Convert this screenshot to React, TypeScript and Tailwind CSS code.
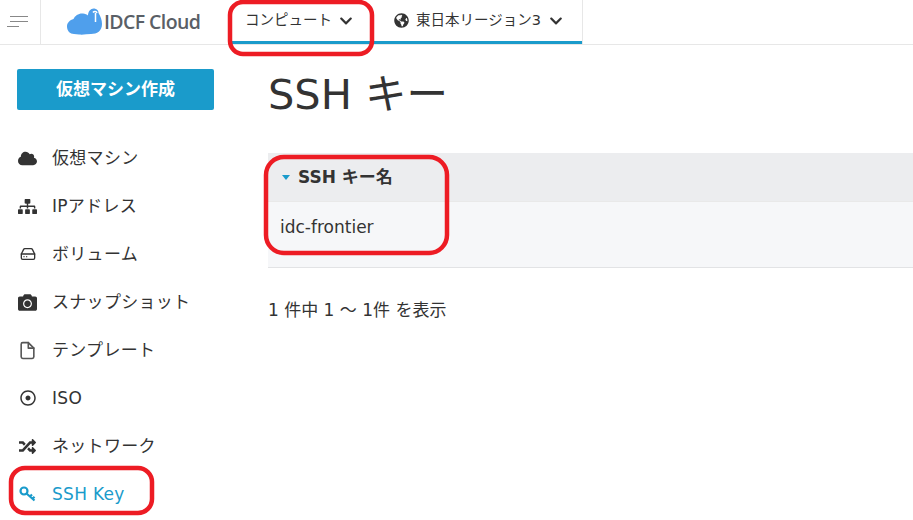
import { FaCloud, FaSitemap, FaCamera, FaRandom, FaGlobeAmericas, FaChevronDown, FaRegDotCircle } from "react-icons/fa";
import { FiHardDrive, FiFile } from "react-icons/fi";
import type { ReactNode } from "react";

function Item({ icon, label, active }: { icon: ReactNode; label: string; active?: boolean }) {
  return (
    <div className={`flex h-12 items-center ${active ? "text-[#1a9bcb]" : "text-[#333333]"}`}>
      <div className="flex w-[52px] justify-center pl-[3px]">
        <div className="flex w-5 justify-center">{icon}</div>
      </div>
      <span className="text-[17px] leading-none tracking-[0.3px]">{label}</span>
    </div>
  );
}

export default function App() {
  return (
    <div className="relative h-[520px] w-[913px] overflow-hidden bg-white font-['DejaVu_Sans','Noto_Sans_CJK_JP',sans-serif] text-[#333333]">
      <header className="flex h-[45px] border-b border-[#e7e7e7]">
        <div className="flex w-[41px] flex-col items-center justify-center gap-[4px] border-r border-[#e7e7e7] pr-[3px] pb-[1px]">
          <div className="h-px w-[18px] bg-[#888888]" />
          <div className="h-px w-[18px] bg-[#888888]" />
          <div className="ml-[7px] h-px w-[12px] self-start bg-[#888888]" />
        </div>
        <div className="flex w-[187px] items-center pl-[26px]">
          <svg width="35" height="27" viewBox="0 0 35 27" className="mb-[2px]">
            <path d="M7 26C3 26 0 23 0 18.500C0 14.500 3 12 6.500 11C8 7.500 12 5 16 5.500C18 5.800 20 6.500 21 7.500C21 3 24 0 27.500 0.500C30.500 1 31.500 3 31.500 5C33.500 8 35 12 35 16C35 23 30 26 24 26C20 26 16 27 12 26.500Z" fill="#4f9fec" />
            <path d="M28.500 5V14M26 4.500C27 3 29.500 3 30 5" stroke="#ffffff" strokeWidth="1.500" fill="none" />
          </svg>
          <span className="ml-[2px] font-['Open_Sans','Noto_Sans',sans-serif] text-[19.500px] font-semibold tracking-[-0.6px] text-[#5a5f66]">IDCF Cloud</span>
        </div>
        <div className="flex h-[44px] w-[354px] border-b-[3px] border-[#1a9bcb]">
          <div className="flex w-[145px] items-center pl-[17px] text-[14.500px]">
            <span>コンピュート</span>
            <FaChevronDown className="ml-[7px] text-[14px]" />
          </div>
          <div className="flex flex-1 items-center pl-[21px] text-[14.500px]">
            <FaGlobeAmericas className="text-[15px]" />
            <span className="ml-[7px]">東日本リージョン3</span>
            <FaChevronDown className="ml-[8px] text-[14px]" />
          </div>
        </div>
        <div className="h-[44px] w-px bg-[#e7e7e7]" />
      </header>

      <div className="flex">
        <aside className="w-[268px] shrink-0">
          <div className="pl-[17px] pt-[24px]">
            <div className="flex h-[41px] w-[197px] items-center justify-center rounded-[2px] bg-[#1a9bcb] text-[17px] font-bold text-white">
              仮想マシン作成
            </div>
          </div>
          <nav className="mt-[24px]">
            <Item icon={<FaCloud className="text-[19px]" />} label="仮想マシン" />
            <Item icon={<FaSitemap className="text-[19px]" />} label="IPアドレス" />
            <Item icon={<FiHardDrive className="text-[16px]" />} label="ボリューム" />
            <Item icon={<FaCamera className="text-[19px]" />} label="スナップショット" />
            <Item icon={<FiFile className="text-[19px] text-[#555555]" />} label="テンプレート" />
            <Item icon={<FaRegDotCircle className="text-[16px]" />} label="ISO" />
            <Item icon={<FaRandom className="text-[17px]" />} label="ネットワーク" />
            <Item
              active
              icon={
                <svg width="18" height="16" viewBox="0 0 18 16" fill="none" stroke="currentColor" strokeWidth="2.200">
                  <circle cx="5" cy="5" r="3.500" />
                  <path d="M7.500 7.500L15.500 14.500M11 10.500L13 8.500M13.500 12.800L15.500 10.800" />
                </svg>
              }
              label="SSH Key"
            />
          </nav>
        </aside>
        <main className="flex-1">
          <h1 className="mt-[22px] text-[41.500px] leading-[56px]">SSH キー</h1>
          <div className="mt-[30px]">
            <div className="flex h-[49px] items-center border-b border-[#e9e9e9] bg-[#ecedef] pl-[14px] pt-[1px]">
              <span className="h-0 w-0 border-x-[4px] border-t-[5px] border-x-transparent border-t-[#1a9bcb]" />
              <span className="ml-[8px] text-[17px] font-bold">SSH キー名</span>
            </div>
            <div className="flex h-[66px] items-start border-b border-[#e2e3e5] bg-[#f6f7f9] pl-[12px] pt-[13px] text-[17px]">
              idc-frontier
            </div>
          </div>
          <p className="mt-[32px] text-[17px] leading-[20px]">1 件中 1 〜 1件 を表示</p>
        </main>
      </div>

      <svg className="pointer-events-none absolute left-0 top-0" width="913" height="520" fill="none" stroke="#ed1c24" strokeWidth="4.500">
        <rect x="230" y="2" width="142" height="52" rx="13" />
        <rect x="266" y="157" width="181" height="96" rx="18" />
        <rect x="11" y="468" width="141" height="45" rx="14" />
      </svg>
    </div>
  );
}
